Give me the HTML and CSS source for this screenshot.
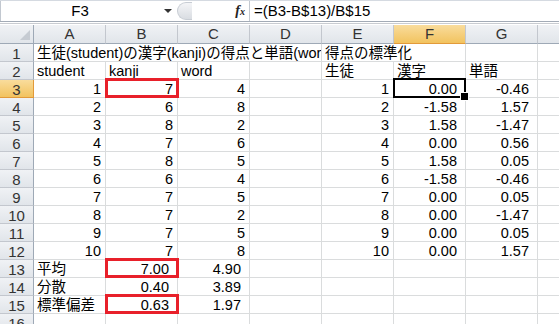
FILE: index.html
```html
<!DOCTYPE html>
<html lang="ja">
<head>
  <meta charset="UTF-8">
  <title>標準化</title>
  <link rel="stylesheet" href="styles.css">
</head>
<body>
  <div class="formula-bar">
    <div class="name-box">
      <span class="name">F3</span>
      <span class="dd"></span>
    </div>
    <div class="grip"></div>
    <div class="fx"><i>f</i><span>x</span></div>
    <div class="formula">=(B3-B$13)/B$15</div>
  </div>
  <div class="bar-gap"></div>

  <div class="sheet">
    <div class="hd corner"><span class="tri"></span></div>
    <div class="hd">A</div><div class="hd">B</div><div class="hd">C</div><div class="hd">D</div>
    <div class="hd">E</div><div class="hd sel">F</div><div class="hd">G</div><div class="hd"></div>

    <div class="rh">1</div>
    <div class="c span4">生徒(student)の漢字(kanji)の得点と単語(word)の得点</div>
    <div class="c span2">得点の標準化</div><div class="c"></div><div class="c"></div>

    <div class="rh">2</div>
    <div class="c">student</div><div class="c">kanji</div><div class="c">word</div><div class="c"></div>
    <div class="c">生徒</div><div class="c">漢字</div><div class="c">単語</div><div class="c"></div>

    <div class="rh sel">3</div>
    <div class="c n">1</div><div class="c n mark">7</div><div class="c n">4</div><div class="c"></div>
    <div class="c n">1</div><div class="c n f active">0.00</div><div class="c n f">-0.46</div><div class="c"></div>

    <div class="rh">4</div>
    <div class="c n">2</div><div class="c n">6</div><div class="c n">8</div><div class="c"></div>
    <div class="c n">2</div><div class="c n f">-1.58</div><div class="c n f">1.57</div><div class="c"></div>

    <div class="rh">5</div>
    <div class="c n">3</div><div class="c n">8</div><div class="c n">2</div><div class="c"></div>
    <div class="c n">3</div><div class="c n f">1.58</div><div class="c n f">-1.47</div><div class="c"></div>

    <div class="rh">6</div>
    <div class="c n">4</div><div class="c n">7</div><div class="c n">6</div><div class="c"></div>
    <div class="c n">4</div><div class="c n f">0.00</div><div class="c n f">0.56</div><div class="c"></div>

    <div class="rh">7</div>
    <div class="c n">5</div><div class="c n">8</div><div class="c n">5</div><div class="c"></div>
    <div class="c n">5</div><div class="c n f">1.58</div><div class="c n f">0.05</div><div class="c"></div>

    <div class="rh">8</div>
    <div class="c n">6</div><div class="c n">6</div><div class="c n">4</div><div class="c"></div>
    <div class="c n">6</div><div class="c n f">-1.58</div><div class="c n f">-0.46</div><div class="c"></div>

    <div class="rh">9</div>
    <div class="c n">7</div><div class="c n">7</div><div class="c n">5</div><div class="c"></div>
    <div class="c n">7</div><div class="c n f">0.00</div><div class="c n f">0.05</div><div class="c"></div>

    <div class="rh">10</div>
    <div class="c n">8</div><div class="c n">7</div><div class="c n">2</div><div class="c"></div>
    <div class="c n">8</div><div class="c n f">0.00</div><div class="c n f">-1.47</div><div class="c"></div>

    <div class="rh">11</div>
    <div class="c n">9</div><div class="c n">7</div><div class="c n">5</div><div class="c"></div>
    <div class="c n">9</div><div class="c n f">0.00</div><div class="c n f">0.05</div><div class="c"></div>

    <div class="rh">12</div>
    <div class="c n">10</div><div class="c n">7</div><div class="c n">8</div><div class="c"></div>
    <div class="c n">10</div><div class="c n f">0.00</div><div class="c n f">1.57</div><div class="c"></div>

    <div class="rh">13</div>
    <div class="c">平均</div><div class="c n f mark">7.00</div><div class="c n f">4.90</div><div class="c"></div>
    <div class="c"></div><div class="c"></div><div class="c"></div><div class="c"></div>

    <div class="rh">14</div>
    <div class="c">分散</div><div class="c n f">0.40</div><div class="c n f">3.89</div><div class="c"></div>
    <div class="c"></div><div class="c"></div><div class="c"></div><div class="c"></div>

    <div class="rh">15</div>
    <div class="c">標準偏差</div><div class="c n f mark">0.63</div><div class="c n f">1.97</div><div class="c"></div>
    <div class="c"></div><div class="c"></div><div class="c"></div><div class="c"></div>

    <div class="rh">16</div>
    <div class="c"></div><div class="c"></div><div class="c"></div><div class="c"></div>
    <div class="c"></div><div class="c"></div><div class="c"></div><div class="c"></div>
  </div>
</body>
</html>
```

FILE: styles.css
```css
* { margin: 0; padding: 0; box-sizing: border-box; }
html, body {
  width: 559px;
  height: 324px;
  overflow: hidden;
  background: #fff;
  font-family: "Liberation Sans", "Noto Sans CJK JP", sans-serif;
  color: #000;
}

/* formula bar */
.formula-bar {
  display: flex;
  height: 22px;
  border-top: 1px solid #d5dae1;
  border-bottom: 1px solid #a3abb6;
  background: #fff;
}

.name-box {
  display: flex;
  align-items: center;
  width: 176px;
  border-left: 1px solid #c2c8d0;
}
.name-box .name {
  width: 158px;
  text-align: center;
  font-size: 15px;
  line-height: 20px;
}
.name-box .dd {
  margin-left: 5px;
  width: 0;
  height: 0;
  border-left: 4px solid transparent;
  border-right: 4px solid transparent;
  border-top: 4px solid #333;
}

.grip {
  width: 15px;
  margin: 1px 0 1px 1px;
  border-radius: 9px 0 0 9px;
  border: 1px solid #c8cdd4;
  border-right: none;
  background: linear-gradient(#f4f5f7, #d9dde2);
}

.fx {
  width: 58px;
  padding-right: 4px;
  text-align: right;
  font-family: "Liberation Serif", serif;
  font-weight: bold;
  font-size: 14px;
  line-height: 20px;
  color: #222;
  border-right: 1px solid #c2c8d0;
}
.fx span { font-size: 10px; font-style: italic; }

.formula {
  flex: 1;
  padding-left: 4px;
  font-size: 15px;
  line-height: 20px;
}

.bar-gap {
  height: 3px;
  border-bottom: 1px solid #fff;
  background: linear-gradient(#fff 1px, #c9ccd1 1px, #c9ccd1 2px, #fff 2px);
}

/* grid */
.sheet {
  display: grid;
  grid-template-columns: 34px repeat(8, 72px);
  grid-template-rows: 19px;
  grid-auto-rows: 18px;
  width: 559px;
  overflow: hidden;
  font-size: 14.5px;
}

.hd, .rh {
  background: linear-gradient(#f0f2f5, #e1e5ea);
  border-right: 1px solid #c3c7ce;
  border-bottom: 1px solid #9ea9b6;
  color: #333;
  text-align: center;
  font-size: 15px;
  line-height: 18px;
}
.rh {
  border-bottom-color: #c3c7ce;
  border-right-color: #9ea9b6;
  line-height: 17px;
  padding-top: 1px;
}
.hd.sel, .rh.sel {
  background: linear-gradient(#f9dc9c, #f2c35f);
  border-bottom-color: #e29a3a;
}
.rh.sel { border-right-color: #e29a3a; }

.corner { position: relative; border-right-color: #9ea9b6; }
.corner .tri {
  position: absolute;
  right: 3px;
  bottom: 3px;
  width: 0;
  height: 0;
  border-left: 10px solid transparent;
  border-bottom: 10px solid #c6cbd2;
}

.c {
  position: relative;
  border-right: 1px solid #dadcdd;
  border-bottom: 1px solid #dadcdd;
  padding: 1px 3px 0;
  line-height: 16px;
  white-space: nowrap;
  overflow: hidden;
}
.span4 { grid-column: span 4; }
.span2 { grid-column: span 2; }
.n { text-align: right; padding-right: 4px; }
.n.f { padding-right: 8px; }

.mark, .active { overflow: visible; }
.mark::after {
  content: "";
  position: absolute;
  top: -2px;
  left: -1px;
  right: -2px;
  bottom: -1px;
  border: 3px solid #e8202a;
  z-index: 2;
}
.active::after {
  content: "";
  position: absolute;
  top: -2px;
  left: -1px;
  right: -1px;
  bottom: -1px;
  border: 2px solid #000;
  z-index: 2;
}
.active::before {
  content: "";
  position: absolute;
  right: -4px;
  bottom: -4px;
  width: 7px;
  height: 7px;
  background: #000;
  border: 1px solid #fff;
  z-index: 3;
}
```
